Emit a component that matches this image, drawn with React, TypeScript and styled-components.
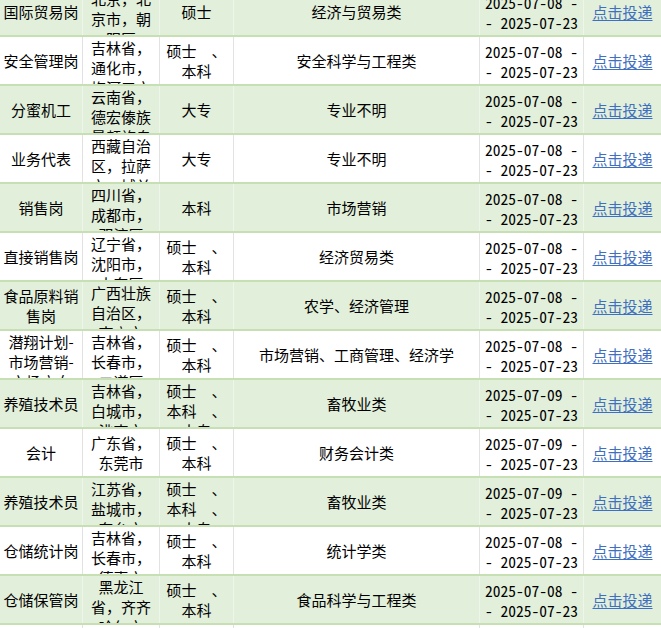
import React from "react";
import styled, { createGlobalStyle } from "styled-components";

const GlobalStyle = createGlobalStyle`
  html, body {
    margin: 0;
    padding: 0;
    background: #ffffff;
  }
  body {
    font-family: "Noto Sans CJK SC", "Noto Sans", sans-serif;
    font-size: 15px;
    color: #000;
    overflow: hidden;
  }
`;

const Viewport = styled.div`
  width: 661px;
  height: 628px;
  overflow: hidden;
`;

const Table = styled.div`
  display: flex;
  flex-direction: column;
  margin-top: -12px;
`;

const Row = styled.div<{ $alt: boolean }>`
  display: grid;
  grid-template-columns: 82px 77px 74px 246px 104px 78px;
  height: 49px;
  box-sizing: border-box;
  border-bottom: 2px solid #c6e0b4;
  background: ${(p) => (p.$alt ? "#e2efda" : "#ffffff")};
  --sep: ${(p) => (p.$alt ? "#eef5ea" : "#e2e2e2")};
`;

const Cell = styled.div<{ $first?: boolean }>`
  display: flex;
  flex-direction: column;
  overflow: hidden;
  box-sizing: border-box;
  padding: 0 3px;
  border-left: ${(p) => (p.$first ? "none" : "1px solid var(--sep)")};
  text-align: center;
  line-height: 20px;
`;

const Inner = styled.div`
  margin: auto 0;
  width: 100%;
  padding-top: 1px;
`;

const DateLine = styled.span`
  display: block;
  white-space: nowrap;
  font-family: "Noto Sans Mono CJK SC", "DejaVu Sans Mono", monospace;
  font-size: 15.5px;
`;

const Link = styled.a`
  color: #3f6fc0;
  text-decoration: underline;
  text-underline-offset: 2px;
  cursor: pointer;
`;

type Job = {
  name: string;
  place: string;
  edu: string;
  major: string;
  start: string;
  end: string;
};

const jobs: Job[] = [
  { name: "国际贸易岗", place: "北京，北京市，朝阳区", edu: "硕士", major: "经济与贸易类", start: "2025-07-08", end: "2025-07-23" },
  { name: "安全管理岗", place: "吉林省，通化市，梅河口市", edu: "硕士　、本科", major: "安全科学与工程类", start: "2025-07-08", end: "2025-07-23" },
  { name: "分蜜机工", place: "云南省，德宏傣族景颇族自治州，芒市", edu: "大专", major: "专业不明", start: "2025-07-08", end: "2025-07-23" },
  { name: "业务代表", place: "西藏自治区，拉萨市，城关区", edu: "大专", major: "专业不明", start: "2025-07-08", end: "2025-07-23" },
  { name: "销售岗", place: "四川省，成都市，双流区", edu: "本科", major: "市场营销", start: "2025-07-08", end: "2025-07-23" },
  { name: "直接销售岗", place: "辽宁省，沈阳市，大东区", edu: "硕士　、本科", major: "经济贸易类", start: "2025-07-08", end: "2025-07-23" },
  { name: "食品原料销售岗", place: "广西壮族自治区，南宁市", edu: "硕士　、本科", major: "农学、经济管理", start: "2025-07-08", end: "2025-07-23" },
  { name: "潜翔计划-市场营销-市场方向", place: "吉林省，长春市，二道区", edu: "硕士　、本科", major: "市场营销、工商管理、经济学", start: "2025-07-08", end: "2025-07-23" },
  { name: "养殖技术员", place: "吉林省，白城市，洮南市", edu: "硕士　、本科　、大专", major: "畜牧业类", start: "2025-07-09", end: "2025-07-23" },
  { name: "会计", place: "广东省，东莞市", edu: "硕士　、本科", major: "财务会计类", start: "2025-07-09", end: "2025-07-23" },
  { name: "养殖技术员", place: "江苏省，盐城市，东台市", edu: "硕士　、本科　、大专", major: "畜牧业类", start: "2025-07-09", end: "2025-07-23" },
  { name: "仓储统计岗", place: "吉林省，长春市，德惠市", edu: "硕士　、本科", major: "统计学类", start: "2025-07-08", end: "2025-07-23" },
  { name: "仓储保管岗", place: "黑龙江省，齐齐哈尔市", edu: "硕士　、本科", major: "食品科学与工程类", start: "2025-07-08", end: "2025-07-23" },
  { name: "质量管理岗", place: "吉林省，长春市，绿园区", edu: "本科", major: "食品科学与工程类", start: "2025-07-08", end: "2025-07-23" },
];

export default function App() {
  return (
    <>
      <GlobalStyle />
      <Viewport>
        <Table>
          {jobs.map((j, i) => (
            <Row key={i} $alt={i % 2 === 0}>
              <Cell $first>
                <Inner>{j.name}</Inner>
              </Cell>
              <Cell>
                <Inner>{j.place}</Inner>
              </Cell>
              <Cell>
                <Inner>{j.edu}</Inner>
              </Cell>
              <Cell>
                <Inner>{j.major}</Inner>
              </Cell>
              <Cell>
                <Inner>
                  <DateLine>{j.start} -</DateLine>
                  <DateLine>- {j.end}</DateLine>
                </Inner>
              </Cell>
              <Cell>
                <Inner>
                  <Link>点击投递</Link>
                </Inner>
              </Cell>
            </Row>
          ))}
        </Table>
      </Viewport>
    </>
  );
}
